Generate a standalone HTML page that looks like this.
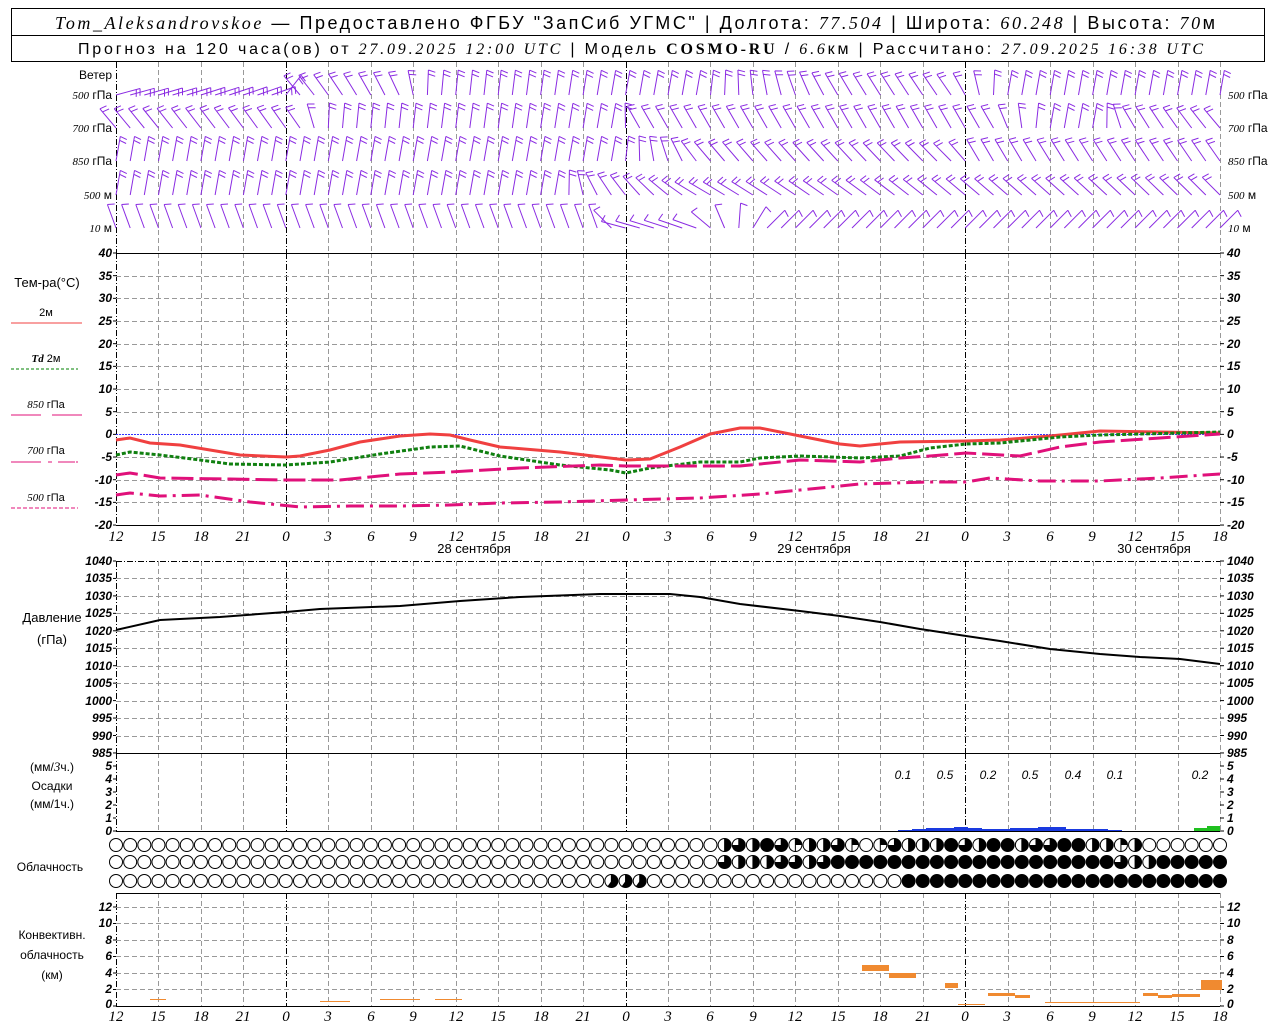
<!DOCTYPE html>
<html><head><meta charset="utf-8"><style>
html,body{margin:0;padding:0;background:#fff;width:1280px;height:1024px;overflow:hidden}
svg{display:block}
text{font-family:"Liberation Sans",sans-serif;font-size:12px;fill:#000}
.it{font-family:"Liberation Serif",serif;font-style:italic;font-size:11px}
.xl text{font-family:"Liberation Serif",serif;font-style:italic;font-size:15px;text-anchor:middle}
</style></head><body>
<svg id="s" width="1280" height="1024" viewBox="0 0 1280 1024" xmlns="http://www.w3.org/2000/svg">
<rect x="11.5" y="8.5" width="1253" height="53" fill="none" stroke="#000"/>
<line x1="11" y1="35.5" x2="1265" y2="35.5" stroke="#000"/>
<text x="55" y="29" textLength="1160" lengthAdjust="spacing" style="font-size:18px"><tspan style="font-family:'Liberation Serif',serif;font-style:italic">Tom_Aleksandrovskoe</tspan> — Предоставлено ФГБУ "ЗапСиб УГМС" | Долгота: <tspan style="font-family:'Liberation Serif',serif;font-style:italic">77.504</tspan> | Широта: <tspan style="font-family:'Liberation Serif',serif;font-style:italic">60.248</tspan> | Высота: <tspan style="font-family:'Liberation Serif',serif;font-style:italic">70</tspan>м</text>
<text x="78" y="54" textLength="1125" lengthAdjust="spacing" style="font-size:16px">Прогноз на 120 часа(ов) от <tspan style="font-family:'Liberation Serif',serif;font-style:italic">27.09.2025 12:00 UTC</tspan>  | Модель <tspan style="font-family:'Liberation Serif',serif;font-weight:bold">COSMO-RU</tspan> / <tspan style="font-family:'Liberation Serif',serif;font-style:italic">6.6</tspan>км | Рассчитано: <tspan style="font-family:'Liberation Serif',serif;font-style:italic">27.09.2025 16:38 UTC</tspan></text>
<g id="grid"></g>
<g style="font-size:11px">
<text x="112" y="79" text-anchor="end">Ветер</text>
<text x="112" y="99" text-anchor="end"><tspan class="it">500</tspan> гПа</text>
<text x="112" y="132" text-anchor="end"><tspan class="it">700</tspan> гПа</text>
<text x="112" y="165" text-anchor="end"><tspan class="it">850</tspan> гПа</text>
<text x="112" y="199" text-anchor="end"><tspan class="it">500</tspan> м</text>
<text x="112" y="232" text-anchor="end"><tspan class="it">10</tspan>   м</text>
<text x="1228" y="99"><tspan class="it">500</tspan> гПа</text>
<text x="1228" y="132"><tspan class="it">700</tspan> гПа</text>
<text x="1228" y="165"><tspan class="it">850</tspan> гПа</text>
<text x="1228" y="199"><tspan class="it">500</tspan> м</text>
<text x="1228" y="232"><tspan class="it">10</tspan>   м</text>
</g>
<text x="47" y="287" text-anchor="middle" style="font-size:13px">Тем-ра(°C)</text>
<text x="46" y="316" text-anchor="middle" style="font-size:11px">2м</text>
<line x1="11" y1="323" x2="82" y2="323" stroke="#f04040"/>
<text x="46" y="362" text-anchor="middle" style="font-size:11px"><tspan class="it" font-weight="bold">Td</tspan>  2м</text>
<line x1="11" y1="369" x2="78" y2="369" stroke="#008000" stroke-dasharray="3,2"/>
<text x="46" y="408" text-anchor="middle" style="font-size:11px"><tspan class="it">850</tspan> гПа</text>
<path d="M11 415H41M52 415H82" stroke="#e0107a"/>
<text x="46" y="454" text-anchor="middle" style="font-size:11px"><tspan class="it">700</tspan> гПа</text>
<path d="M11 462H41M48 462H52M58 462H75M76 462H78" stroke="#e0107a"/>
<text x="46" y="501" text-anchor="middle" style="font-size:11px"><tspan class="it">500</tspan> гПа</text>
<line x1="11" y1="508" x2="78" y2="508" stroke="#e0107a" stroke-dasharray="4,2"/>
<text x="52" y="622" text-anchor="middle" style="font-size:13px">Давление</text>
<text x="52" y="644" text-anchor="middle" style="font-size:13px">(гПа)</text>
<text x="52" y="771" text-anchor="middle">(мм/<tspan class="it" style="font-size:13px">3</tspan>ч.)</text>
<text x="52" y="790" text-anchor="middle">Осадки</text>
<text x="52" y="808" text-anchor="middle">(мм/1ч.)</text>
<text x="50" y="871" text-anchor="middle">Облачность</text>
<text x="52" y="939" text-anchor="middle">Конвективн.</text>
<text x="52" y="959" text-anchor="middle">облачность</text>
<text x="52" y="979" text-anchor="middle">(км)</text>
<g class="xl">
<text x="116" y="541">12</text><text x="158" y="541">15</text><text x="201" y="541">18</text><text x="243" y="541">21</text><text x="286" y="541">0</text><text x="328" y="541">3</text><text x="371" y="541">6</text><text x="413" y="541">9</text><text x="456" y="541">12</text><text x="498" y="541">15</text><text x="541" y="541">18</text><text x="583" y="541">21</text><text x="626" y="541">0</text><text x="668" y="541">3</text><text x="710" y="541">6</text><text x="753" y="541">9</text><text x="795" y="541">12</text><text x="838" y="541">15</text><text x="880" y="541">18</text><text x="923" y="541">21</text><text x="965" y="541">0</text><text x="1007" y="541">3</text><text x="1050" y="541">6</text><text x="1092" y="541">9</text><text x="1135" y="541">12</text><text x="1177" y="541">15</text><text x="1220" y="541">18</text>
</g>
<g class="xl">
<text x="116" y="1021">12</text><text x="158" y="1021">15</text><text x="201" y="1021">18</text><text x="243" y="1021">21</text><text x="286" y="1021">0</text><text x="328" y="1021">3</text><text x="371" y="1021">6</text><text x="413" y="1021">9</text><text x="456" y="1021">12</text><text x="498" y="1021">15</text><text x="541" y="1021">18</text><text x="583" y="1021">21</text><text x="626" y="1021">0</text><text x="668" y="1021">3</text><text x="710" y="1021">6</text><text x="753" y="1021">9</text><text x="795" y="1021">12</text><text x="838" y="1021">15</text><text x="880" y="1021">18</text><text x="923" y="1021">21</text><text x="965" y="1021">0</text><text x="1007" y="1021">3</text><text x="1050" y="1021">6</text><text x="1092" y="1021">9</text><text x="1135" y="1021">12</text><text x="1177" y="1021">15</text><text x="1220" y="1021">18</text>
</g>
<text x="474" y="553" text-anchor="middle" style="font-size:13px">28 сентября</text>
<text x="814" y="553" text-anchor="middle" style="font-size:13px">29 сентября</text>
<text x="1154" y="553" text-anchor="middle" style="font-size:13px">30 сентября</text>
<g class="it" style="font-size:14px" text-anchor="middle">
<text x="903" y="779">0.1</text><text x="945" y="779">0.5</text><text x="988" y="779">0.2</text><text x="1030" y="779">0.5</text><text x="1073" y="779">0.4</text><text x="1115" y="779">0.1</text><text x="1200" y="779">0.2</text>
</g>
<g class="it" style="font-size:10px;font-weight:bold">
<g text-anchor="end">
<text x="112" y="257">40</text><text x="112" y="280">35</text><text x="112" y="302">30</text><text x="112" y="325">25</text><text x="112" y="348">20</text><text x="112" y="370">15</text><text x="112" y="393">10</text><text x="112" y="416">5</text><text x="112" y="438">0</text><text x="112" y="461">-5</text><text x="112" y="484">-10</text><text x="112" y="506">-15</text><text x="112" y="529">-20</text>
<text x="112" y="565">1040</text><text x="112" y="582">1035</text><text x="112" y="600">1030</text><text x="112" y="617">1025</text><text x="112" y="635">1020</text><text x="112" y="652">1015</text><text x="112" y="670">1010</text><text x="112" y="687">1005</text><text x="112" y="705">1000</text><text x="112" y="722">995</text><text x="112" y="740">990</text><text x="112" y="757">985</text>
<text x="112" y="770">5</text><text x="112" y="783">4</text><text x="112" y="796">3</text><text x="112" y="809">2</text><text x="112" y="822">1</text><text x="112" y="835">0</text>
<text x="112" y="911">12</text><text x="112" y="927">10</text><text x="112" y="944">8</text><text x="112" y="960">6</text><text x="112" y="977">4</text><text x="112" y="993">2</text><text x="112" y="1008">0</text>
</g>
<text x="1227" y="257">40</text><text x="1227" y="280">35</text><text x="1227" y="302">30</text><text x="1227" y="325">25</text><text x="1227" y="348">20</text><text x="1227" y="370">15</text><text x="1227" y="393">10</text><text x="1227" y="416">5</text><text x="1227" y="438">0</text><text x="1227" y="461">-5</text><text x="1227" y="484">-10</text><text x="1227" y="506">-15</text><text x="1227" y="529">-20</text>
<text x="1227" y="565">1040</text><text x="1227" y="582">1035</text><text x="1227" y="600">1030</text><text x="1227" y="617">1025</text><text x="1227" y="635">1020</text><text x="1227" y="652">1015</text><text x="1227" y="670">1010</text><text x="1227" y="687">1005</text><text x="1227" y="705">1000</text><text x="1227" y="722">995</text><text x="1227" y="740">990</text><text x="1227" y="757">985</text>
<text x="1227" y="770">5</text><text x="1227" y="783">4</text><text x="1227" y="796">3</text><text x="1227" y="809">2</text><text x="1227" y="822">1</text><text x="1227" y="835">0</text>
<text x="1227" y="911">12</text><text x="1227" y="927">10</text><text x="1227" y="944">8</text><text x="1227" y="960">6</text><text x="1227" y="977">4</text><text x="1227" y="993">2</text><text x="1227" y="1008">0</text>
</g>
<g id="data"></g>
</svg>
<script>
var NS="http://www.w3.org/2000/svg",G=document.getElementById('grid'),D=document.getElementById('data');
function el(p,t,a){var e=document.createElementNS(NS,t);for(var k in a)e.setAttribute(k,a[k]);p.appendChild(e);return e}
function X(h){return 116+h*1104/78}
var vg=[[62,253],[253,525],[561,753],[753,831],[893,1006]];
for(var k=0;k<=26;k++){var x=Math.round(X(k*3))+.5,blk=(k==0||k==4||k==12||k==20);
 vg.forEach(function(r){el(G,'line',{x1:x,x2:x,y1:r[0],y2:r[1],stroke:blk?'#000':'#999','stroke-dasharray':blk?'6,2,1,2':'5,3'})});}
function hl(y,sol){el(G,'line',{x1:116,x2:1220,y1:y+.5,y2:y+.5,stroke:sol?'#000':'#999','stroke-dasharray':sol?'':'5,3'})}
[276,298,321,344,366,389,412,457,480,502].forEach(function(y){hl(y)});
[578,596,613,631,648,666,683,701,718,736].forEach(function(y){hl(y)});
[989,973,956,940,923,907].forEach(function(y){hl(y)});
hl(253,1);hl(753,1);hl(831,1);hl(893,1);hl(1006,1);hl(525,1);
el(G,'line',{x1:116,x2:1220,y1:561.5,y2:561.5,stroke:'#000','stroke-dasharray':'6,2,1,2'});
el(G,'line',{x1:116,x2:1220,y1:434.5,y2:434.5,stroke:'#33f','stroke-dasharray':'2,1'});
[[253,525,22.67],[561,753,17.45],[766,831,13],[907,1006,16.5]].forEach(function(r){for(var y=r[0];y<=r[1]+1;y+=r[2]){el(G,'line',{x1:113,x2:116,y1:y,y2:y,stroke:'#000'});el(G,'line',{x1:1220,x2:1224,y1:y,y2:y,stroke:'#000'})}});
function pl(pts,col,w,dash){el(D,'polyline',{points:pts,fill:'none',stroke:col,'stroke-width':w,'stroke-dasharray':dash||''})}
pl("116,440 130,438 150,443 180,445 210,450 240,455 286,457 300,456 330,450 360,442 400,436 430,434 450,435 470,440 500,447 560,452 626,460 650,459 680,447 710,434 740,428 760,428 800,436 840,444 860,446 900,442 966,441 1000,440 1050,436 1100,431 1160,432 1220,433","#f04040",3);
pl("116,455 130,452 160,455 200,460 230,464 286,465 330,462 380,454 430,447 460,446 500,456 560,465 610,470 626,473 650,468 700,462 740,462 760,458 800,456 860,458 900,456 930,448 966,444 1000,443 1060,437 1100,435 1220,432","#108010",3,"4,2");
pl("116,475 130,473 160,478 230,479 286,480 340,480 400,474 450,472 520,468 600,465 626,466 670,466 740,466 800,460 860,462 900,458 930,456 966,453 1020,456 1060,447 1100,442 1160,438 1220,434","#e0107a",3,"22,6");
pl("116,495 130,493 160,496 200,495 250,502 300,507 350,506 400,506 450,505 500,503 560,502 626,500 700,498 760,494 800,490 860,484 930,482 966,482 990,478 1040,481 1100,481 1160,478 1220,474","#e0107a",3,"18,6,3,6");
pl("116,630 160,620 220,617 286,612 320,609 400,606 460,601 520,597 600,594 670,594 700,597 740,604 800,611 840,616 880,622 920,629 966,636 1000,641 1050,649 1100,654 1140,657 1180,659 1220,664","#000",2);
[[898,912,1],[912,926,2],[926,940,3],[940,954,3],[954,968,4],[968,982,3],[982,996,2],[996,1010,2],[1010,1024,3],[1024,1038,3],[1038,1052,4],[1052,1066,4],[1066,1080,2],[1080,1094,2],[1094,1108,2],[1108,1122,1]].forEach(function(b){el(D,'rect',{x:b[0],y:831-b[2],width:b[1]-b[0],height:b[2],fill:'#1a3ae0'})});
el(D,'rect',{x:1194,y:828,width:13,height:3,fill:'#20c020'});el(D,'rect',{x:1207,y:826,width:13,height:5,fill:'#20c020'});
[[862,875,965,6],[875,889,965,6],[889,916,973,5],[945,958,983,5],[988,1015,993,3],[1015,1030,995,3],[1143,1158,993,3],[1158,1172,995,3],[1172,1200,994,3],[1201,1222,980,10],[150,166,999,1],[320,350,1001,1],[380,420,999,1],[435,462,999,1],[1045,1140,1002,1],[958,985,1004,1]].forEach(function(b){el(D,'rect',{x:b[0],y:b[2],width:b[1]-b[0],height:b[3],fill:'#f08a30'})});
var rows=[845,862,881];
function cf(r,i){
 if(r==0){if(i>=43&&i<=72)return [.5,.75,.5,1,.75,.25,.5,.5,.75,.25,0,.25,.75,.5,.5,.5,1,.75,.5,1,1,.5,.75,.75,1,1,.5,.5,.25,.5][i-43];return 0}
 if(r==1){if(i>=43&&i<=50)return [.75,.5,.5,.5,.75,.75,.5,.75][i-43];if(i>=51&&i<=70)return 1;if(i==71)return .75;if(i==72||i==73)return .5;if(i>73)return 1;return 0}
 if(i>=35&&i<=37)return .6;if(i>=56)return 1;return 0}
for(var r=0;r<3;r++)for(var i=0;i<=78;i++){var x=X(i),y=rows[r],f=cf(r,i),R=6.5;
 el(D,'circle',{cx:x,cy:y,r:R,fill:f>=1?'#000':'#fff',stroke:'#000'});
 if(f>0&&f<1){var a=f*2*Math.PI,x2=x+R*Math.sin(a),y2=y-R*Math.cos(a);
  el(D,'path',{d:'M'+x+' '+y+'V'+(y-R)+'A'+R+' '+R+' 0 '+(f>.5?1:0)+' 1 '+x2+' '+y2+'Z',fill:'#000'});
  el(D,'line',{x1:x,x2:x,y1:y-R,y2:y+R,stroke:'#000'});}}
function interp(k,x){for(var j=0;j<k.length-1;j++)if(x<=k[j+1][0]){var t=(x-k[j][0])/(k[j+1][0]-k[j][0]);return k[j][1]+t*(k[j+1][1]-k[j][1])}return k[k.length-1][1]}
var W=[[95,[[116,75],[280,70],[300,-40],[400,-25],[430,5],[620,10],[700,10],[830,-30],[960,-35],[1000,10],[1220,10]],2],
[128,[[116,-40],[300,-35],[330,5],[620,10],[640,-30],[960,-30],[1000,-30],[1040,10],[1100,10],[1130,-30],[1220,-40]],2],
[161,[[116,10],[620,10],[680,-25],[700,-40],[960,-45],[980,-30],[1220,-35]],2],
[195,[[116,10],[560,10],[600,-30],[700,-60],[960,-50],[1220,-45]],2],
[228,[[116,-20],[600,-20],[625,-75],[700,-70],[760,45],[1220,45]],1]];
W.forEach(function(w){for(var i=0;i<=78;i++){var x=X(i),yb=w[0],a=interp(w[1],x)*Math.PI/180,L=25,s=Math.sin(a),c=Math.cos(a);
 var tx=x+L*s,ty=yb-L*c,d='M'+x.toFixed(1)+' '+yb+'L'+tx.toFixed(1)+' '+ty.toFixed(1);
 for(var n=0;n<w[2];n++){var bx=tx-n*4*s,by=ty+n*4*c;d+='M'+bx.toFixed(1)+' '+by.toFixed(1)+'l'+(7*c-2*s).toFixed(1)+' '+(7*s+2*c).toFixed(1)}
 el(D,'path',{d:d,stroke:'#8a2be2',fill:'none','stroke-width':1})}});
</script>
</body></html>
